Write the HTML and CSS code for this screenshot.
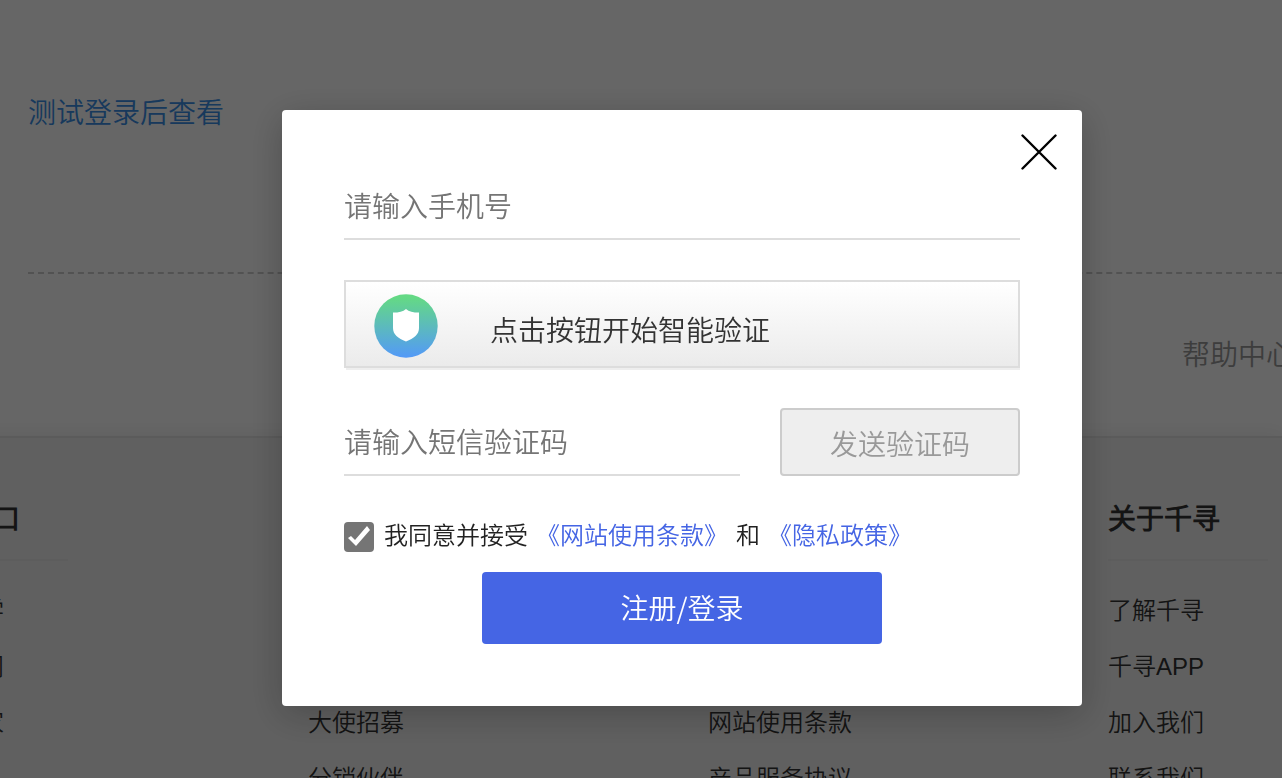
FILE: index.html
```html
<!DOCTYPE html>
<html lang="zh-CN">
<head>
<meta charset="utf-8">
<meta name="viewport" content="width=device-width, initial-scale=1">
<title>注册/登录</title>
<link rel="stylesheet" href="styles.css">
</head>
<body>
<div class="page">
  <main class="content">
    <a class="content-link" href="#">测试登录后查看</a>
  </main>
  <nav class="help"><a href="#">帮助中心</a></nav>
  <footer class="footer">
    <section class="footer-col">
      <h3 class="footer-title">服务入口</h3>
      <ul class="footer-list">
        <li><a href="#">千寻大学</a></li>
        <li><a href="#">千寻新闻</a></li>
        <li><a href="#">行业专家</a></li>
      </ul>
    </section>
    <section class="footer-col footer-col-short">
      <ul class="footer-list">
        <li><a href="#">大使招募</a></li>
        <li><a href="#">分销伙伴</a></li>
      </ul>
    </section>
    <section class="footer-col footer-col-short">
      <ul class="footer-list">
        <li><a href="#">网站使用条款</a></li>
        <li><a href="#">产品服务协议</a></li>
      </ul>
    </section>
    <section class="footer-col">
      <h3 class="footer-title">关于千寻</h3>
      <ul class="footer-list">
        <li><a href="#">了解千寻</a></li>
        <li><a href="#">千寻APP</a></li>
        <li><a href="#">加入我们</a></li>
        <li><a href="#">联系我们</a></li>
      </ul>
    </section>
  </footer>
</div>

<div class="overlay">
  <div class="modal" role="dialog" aria-modal="true" aria-label="注册/登录">
    <button class="close" type="button" aria-label="关闭">
      <svg viewBox="0 0 36 36" width="36" height="36" fill="none" stroke="#000" stroke-width="2.4" stroke-linecap="round"><path d="M1.5 1.5 34.5 34.5M34.5 1.5 1.5 34.5"/></svg>
    </button>
    <form class="form">
      <input class="field" type="tel" placeholder="请输入手机号" aria-label="手机号">
      <button class="verify" type="button">
        <svg class="verify-icon" viewBox="0 0 64 64" width="64" height="64">
          <defs><linearGradient id="shield" x1="0" y1="0" x2="0" y2="1"><stop offset="0.05" stop-color="#64d985"/><stop offset="1" stop-color="#5399f8"/></linearGradient></defs>
          <circle cx="32" cy="32" r="31.7" fill="url(#shield)"/>
          <path fill="#fff" d="M32 15c3 2.600 7 3.600 13 3.600V34c0 6.500-5 10.500-13 13.400C24 44.500 19 40.500 19 34V18.600c6 0 10-1 13-3.600z"/>
        </svg>
        <span class="verify-text">点击按钮开始智能验证</span>
      </button>
      <div class="sms">
        <input class="field" type="text" placeholder="请输入短信验证码" aria-label="短信验证码">
        <button class="send" type="button" disabled>发送验证码</button>
      </div>
      <div class="agree">
        <input class="agree-box" id="agree" type="checkbox" checked>
        <label for="agree">我同意并接受</label>
        <a href="#">《网站使用条款》</a>
        <span>和</span>
        <a href="#">《隐私政策》</a>
      </div>
      <button class="submit" type="submit">注册/登录</button>
    </form>
  </div>
</div>
</body>
</html>
```
FILE: styles.css
```css
* {
  box-sizing: border-box;
}

body {
  margin: 0;
  height: 100vh;
  overflow: hidden;
  background: #fff;
  color: #333;
  font-family: "Noto Sans CJK SC DemiLight", "Noto Sans CJK SC", sans-serif;
  font-size: 28px;
  font-weight: 350;
  line-height: 40px;
}

button,
input {
  margin: 0;
  font: inherit;
}

a {
  color: inherit;
  text-decoration: none;
}

.page {
  display: flex;
  flex-direction: column;
  height: 100vh;
  overflow: hidden;
}

.content {
  flex: none;
  margin-left: 28px;
  padding: 91px 0 141px;
  border-bottom: 2px dashed #ccc;
}

.content-link {
  display: block;
  color: #3a8ee6;
}

.help {
  display: flex;
  flex: none;
  justify-content: flex-end;
  margin-right: -12px;
  padding: 59px 0 63px;
  color: #999;
}

.footer {
  display: grid;
  flex: none;
  grid-template-columns: repeat(4, 160px);
  gap: 240px;
  margin-left: -92px;
  padding: 59px 0;
  border-top: 2px solid #e4e4e4;
  background: #f0f0f0;
  box-shadow: 0 0 20px rgba(0, 0, 0, 0.08);
}

.footer-col {
  white-space: nowrap;
}

.footer-col-short {
  align-self: end;
}

.footer-title {
  margin: 0 0 32px;
  padding-bottom: 22px;
  border-bottom: 2px solid #e8e8e8;
  font-size: 28px;
  font-weight: 700;
}

.footer-list {
  display: grid;
  gap: 20px;
  margin: 0;
  padding: 0;
  list-style: none;
  font-family: "Liberation Sans", "Noto Sans CJK SC DemiLight", "Noto Sans CJK SC", sans-serif;
  font-size: 24px;
  line-height: 36px;
}

.overlay {
  position: fixed;
  inset: 0;
  display: flex;
  align-items: flex-start;
  justify-content: center;
  padding: 110px 0 0 82px;
  background: rgba(0, 0, 0, 0.6);
}

.modal {
  position: relative;
  width: 800px;
  padding: 62px;
  border-radius: 4px;
  background: #fff;
  box-shadow: 0 8px 36px rgba(0, 0, 0, 0.24);
}

.close {
  position: absolute;
  top: 24px;
  right: 25px;
  display: flex;
  padding: 0;
  border: 0;
  background: none;
}

.form {
  display: flex;
  flex-direction: column;
}

.field {
  width: 100%;
  height: 68px;
  padding: 0;
  border: 0;
  border-bottom: 2px solid #ddd;
  background: none;
  outline: 0;
}

.field::placeholder {
  color: #757575;
}

.verify {
  display: flex;
  align-items: center;
  gap: 52px;
  height: 88px;
  margin: 40px 0;
  padding: 4px 28px 0;
  border: 2px solid #ddd;
  background: linear-gradient(#fff, #ebebeb);
  box-shadow: 1px 3px 0 -1px #eee;
  color: #333;
}

.verify-icon {
  flex: none;
}

.verify-text {
  padding-top: 6px;
}

.sms {
  display: grid;
  grid-template-columns: 1fr 240px;
  gap: 40px;
}

.send {
  padding: 2px 0 0;
  border: 2px solid #ccc;
  border-radius: 4px;
  background: #eee;
  color: #999;
}

.agree {
  display: flex;
  align-items: flex-start;
  gap: 8px;
  margin: 40px 0 20px;
  color: #222;
  font-size: 24px;
  line-height: 36px;
}

.agree a {
  color: #4565e4;
}

.agree-box {
  flex: none;
  appearance: none;
  width: 30px;
  height: 30px;
  margin: 6px 2px 0 0;
  border-radius: 4px;
  background: #757575;
}

.agree-box:checked::after {
  display: block;
  height: 30px;
  background: #fff;
  clip-path: polygon(4px 16px, 7px 14px, 11px 18px, 23px 4px, 26px 8px, 12px 24px);
  content: "";
}

.submit {
  align-self: center;
  width: 400px;
  height: 72px;
  padding: 0 0 2px;
  border: 0;
  border-radius: 4px;
  background: #4565e4;
  color: #fff;
}
```
